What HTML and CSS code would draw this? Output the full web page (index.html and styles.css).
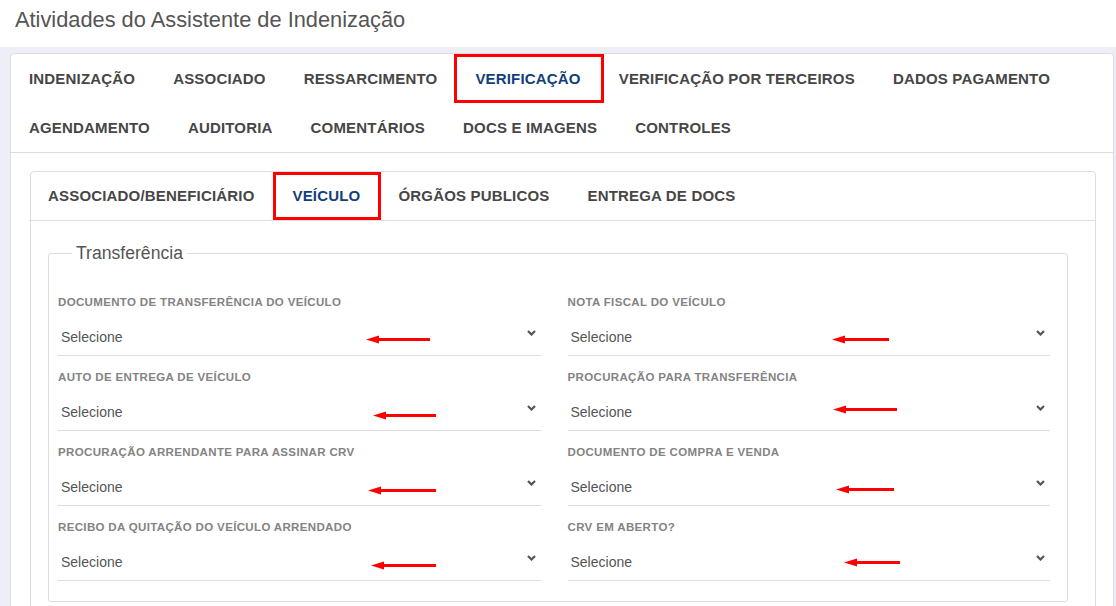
FILE: index.html
```html
<!DOCTYPE html>
<html lang="pt-BR">
<head>
<meta charset="utf-8">
<title>Atividades do Assistente de Indenização</title>
<link rel="stylesheet" href="styles.css">
</head>
<body>
<header class="page-header">
  <h1 class="page-title">Atividades do Assistente de Indenização</h1>
</header>
<main class="page-body">
  <section class="card">
    <ul class="tabs main-tabs">
      <li class="tab">Indenização</li>
      <li class="tab">Associado</li>
      <li class="tab">Ressarcimento</li>
      <li class="tab active marked marked-main">Verificação</li>
      <li class="tab">Verificação por terceiros</li>
      <li class="tab">Dados pagamento</li>
      <li class="tab">Agendamento</li>
      <li class="tab">Auditoria</li>
      <li class="tab">Comentários</li>
      <li class="tab">Docs e imagens</li>
      <li class="tab">Controles</li>
    </ul>
    <div class="card-body">
      <section class="card inner-card">
        <ul class="tabs sub-tabs">
          <li class="tab">Associado/Beneficiário</li>
          <li class="tab active marked marked-sub">Veículo</li>
          <li class="tab">Órgãos publicos</li>
          <li class="tab">Entrega de docs</li>
        </ul>
        <div class="inner-body">
          <fieldset class="group">
            <legend class="group-title">Transferência</legend>
            <div class="form-grid">
              <div class="field">
                <label class="field-label">Documento de transferência do veículo</label>
                <div class="select"><span class="select-value">Selecione</span>
                  <svg class="chevron" viewBox="0 0 9 6" width="9" height="6"><path d="M1 1 L4.5 4.5 L8 1" fill="none" stroke="#555" stroke-width="2.2"/></svg>
                  <svg class="arrow a-l1" viewBox="0 0 64 9" preserveAspectRatio="none"><polygon points="0,4.5 13,0.5 13,3 64,3 64,6 13,6 13,8.5" fill="#f00"/></svg>
                </div>
              </div>
              <div class="field">
                <label class="field-label">Nota fiscal do veículo</label>
                <div class="select"><span class="select-value">Selecione</span>
                  <svg class="chevron" viewBox="0 0 9 6" width="9" height="6"><path d="M1 1 L4.5 4.5 L8 1" fill="none" stroke="#555" stroke-width="2.2"/></svg>
                  <svg class="arrow a-r1" viewBox="0 0 57 9" preserveAspectRatio="none"><polygon points="0,4.5 13,0.5 13,3 57,3 57,6 13,6 13,8.5" fill="#f00"/></svg>
                </div>
              </div>
              <div class="field">
                <label class="field-label">Auto de entrega de veículo</label>
                <div class="select"><span class="select-value">Selecione</span>
                  <svg class="chevron" viewBox="0 0 9 6" width="9" height="6"><path d="M1 1 L4.5 4.5 L8 1" fill="none" stroke="#555" stroke-width="2.2"/></svg>
                  <svg class="arrow a-l2" viewBox="0 0 63 9" preserveAspectRatio="none"><polygon points="0,4.5 13,0.5 13,3 63,3 63,6 13,6 13,8.5" fill="#f00"/></svg>
                </div>
              </div>
              <div class="field">
                <label class="field-label">Procuração para transferência</label>
                <div class="select"><span class="select-value">Selecione</span>
                  <svg class="chevron" viewBox="0 0 9 6" width="9" height="6"><path d="M1 1 L4.5 4.5 L8 1" fill="none" stroke="#555" stroke-width="2.2"/></svg>
                  <svg class="arrow a-r2" viewBox="0 0 64 9" preserveAspectRatio="none"><polygon points="0,4.5 13,0.5 13,3 64,3 64,6 13,6 13,8.5" fill="#f00"/></svg>
                </div>
              </div>
              <div class="field">
                <label class="field-label">Procuração arrendante para assinar CRV</label>
                <div class="select"><span class="select-value">Selecione</span>
                  <svg class="chevron" viewBox="0 0 9 6" width="9" height="6"><path d="M1 1 L4.5 4.5 L8 1" fill="none" stroke="#555" stroke-width="2.2"/></svg>
                  <svg class="arrow a-l3" viewBox="0 0 68 9" preserveAspectRatio="none"><polygon points="0,4.5 13,0.5 13,3 68,3 68,6 13,6 13,8.5" fill="#f00"/></svg>
                </div>
              </div>
              <div class="field">
                <label class="field-label">Documento de compra e venda</label>
                <div class="select"><span class="select-value">Selecione</span>
                  <svg class="chevron" viewBox="0 0 9 6" width="9" height="6"><path d="M1 1 L4.5 4.5 L8 1" fill="none" stroke="#555" stroke-width="2.2"/></svg>
                  <svg class="arrow a-r3" viewBox="0 0 58 9" preserveAspectRatio="none"><polygon points="0,4.5 13,0.5 13,3 58,3 58,6 13,6 13,8.5" fill="#f00"/></svg>
                </div>
              </div>
              <div class="field">
                <label class="field-label">Recibo da quitação do veículo arrendado</label>
                <div class="select"><span class="select-value">Selecione</span>
                  <svg class="chevron" viewBox="0 0 9 6" width="9" height="6"><path d="M1 1 L4.5 4.5 L8 1" fill="none" stroke="#555" stroke-width="2.2"/></svg>
                  <svg class="arrow a-l4" viewBox="0 0 65 9" preserveAspectRatio="none"><polygon points="0,4.5 13,0.5 13,3 65,3 65,6 13,6 13,8.5" fill="#f00"/></svg>
                </div>
              </div>
              <div class="field">
                <label class="field-label">CRV em aberto?</label>
                <div class="select"><span class="select-value">Selecione</span>
                  <svg class="chevron" viewBox="0 0 9 6" width="9" height="6"><path d="M1 1 L4.5 4.5 L8 1" fill="none" stroke="#555" stroke-width="2.2"/></svg>
                  <svg class="arrow a-r4" viewBox="0 0 56 9" preserveAspectRatio="none"><polygon points="0,4.5 13,0.5 13,3 56,3 56,6 13,6 13,8.5" fill="#f00"/></svg>
                </div>
              </div>
            </div>
          </fieldset>
        </div>
      </section>
    </div>
  </section>
</main>
</body>
</html>
```

FILE: styles.css
```css
* { box-sizing: border-box; }

html, body {
  margin: 0;
  padding: 0;
}

body {
  font-family: "Liberation Sans", Arial, sans-serif;
  background: #eeeff6;
  color: #555;
  overflow: hidden;
}

.page-header {
  background: #fff;
  height: 47px;
  padding: 6px 15px 0;
}

.page-title {
  margin: 0;
  font-size: 21.8px;
  font-weight: normal;
  line-height: 28px;
  color: #555;
}

.page-body {
  padding: 6px 2px 0 10px;
}

.card {
  background: #fff;
  border: 1px solid #ddd;
  border-radius: 4px;
}

.tabs {
  list-style: none;
  margin: 0;
  padding: 0;
  display: flex;
  flex-wrap: wrap;
  border-bottom: 1px solid #ddd;
}

.tab {
  position: relative;
  padding: 0 19px;
  font-size: 15px;
  font-weight: bold;
  letter-spacing: 0.18px;
  text-transform: uppercase;
  color: #464646;
  white-space: nowrap;
}

.main-tabs {
  margin-left: -1px;
}

.main-tabs .tab {
  height: 49px;
  line-height: 49px;
}

.sub-tabs {
  margin-left: -2px;
}

.sub-tabs .tab {
  height: 48px;
  line-height: 48px;
}

.tab.active {
  color: #123f79;
}

.marked::after {
  content: "";
  position: absolute;
  border: 3px solid #f00;
  top: 0;
  bottom: 0;
}

.marked-main::after {
  left: -2px;
  right: -4px;
}

.marked-sub::after {
  left: 0;
  right: -2px;
}

.card-body {
  padding: 18px 17px 0 19px;
}

.inner-card {
  height: 460px;
}

.inner-body {
  padding: 21px 27px 20px 17px;
}

.group {
  margin: 0;
  border: 1px solid #ddd;
  border-radius: 3px;
  padding: 31px 17px 6px 9px;
}

.group-title {
  margin-left: 14px;
  padding: 0 4px;
  font-size: 17.6px;
  line-height: 22px;
  color: #555;
}

.form-grid {
  display: grid;
  grid-template-columns: 1fr 1fr;
  column-gap: 27px;
}

.field {
  margin-bottom: 14px;
}

.field-label {
  display: block;
  font-size: 11.5px;
  font-weight: bold;
  letter-spacing: 0.35px;
  text-transform: uppercase;
  line-height: 14px;
  margin-bottom: 7px;
  color: #838383;
}

.select {
  position: relative;
  height: 40px;
  border-bottom: 1px solid #ddd;
  display: flex;
  align-items: center;
  padding: 3px 6px 0 3px;
}

.select-value {
  flex: 1;
  font-size: 14px;
  color: #555;
}

.chevron {
  position: absolute;
  right: 5px;
  top: 14px;
}

.arrow {
  position: absolute;
  height: 9px;
}

.a-l1 { left: 308px; top: 18.5px; width: 64px; }
.a-r1 { left: 264px; top: 18.5px; width: 57px; }
.a-l2 { left: 315px; top: 19.5px; width: 63px; }
.a-r2 { left: 265px; top: 13.5px; width: 64px; }
.a-l3 { left: 310px; top: 19.5px; width: 68px; }
.a-r3 { left: 268px; top: 18.5px; width: 58px; }
.a-l4 { left: 313px; top: 19.5px; width: 65px; }
.a-r4 { left: 276px; top: 16.5px; width: 56px; }
```
